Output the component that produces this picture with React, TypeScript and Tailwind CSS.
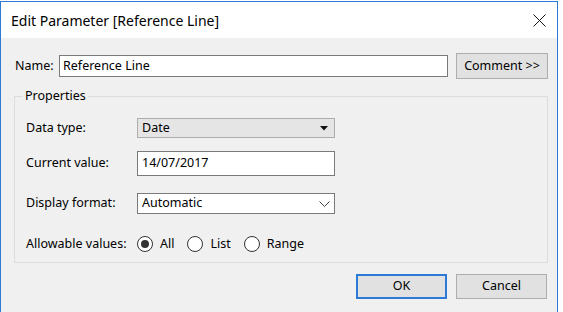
import React from "react";

function Radio({ checked, label }: { checked?: boolean; label: string }) {
  return (
    <div className="flex items-center">
      <div className="w-[16px] h-[16px] rounded-full border border-[#333333] bg-white flex items-center justify-center">
        {checked && <div className="w-[8px] h-[8px] rounded-full bg-[#333333]" />}
      </div>
      <span className="ml-[7px]">{label}</span>
    </div>
  );
}

export default function App() {
  return (
    <div
      className="w-[563px] h-[312px] overflow-hidden bg-white pt-[1px] text-[12.5px] text-black"
      style={{ fontFamily: '"Noto Sans", "Open Sans", sans-serif' }}
    >
      <div className="w-[558px] h-[320px] border-l border-r border-t border-[#2b7bd6] flex flex-col">
        {/* Title bar */}
        <div className="h-[36px] bg-white flex items-center justify-between pl-[10px] pr-[10px]">
          <span className="text-[14px] leading-none pt-[1px]">Edit Parameter [Reference Line]</span>
          <svg width="13" height="13" viewBox="0 0 13 13" className="mr-[1px]">
            <path d="M0.5 0.5 L12.5 12.5 M12.5 0.5 L0.5 12.5" stroke="#111" strokeWidth="1" fill="none" />
          </svg>
        </div>

        {/* Body */}
        <div className="flex-1 bg-[#f0f0f0] pl-[13px] pt-[15px]">
          {/* Name row */}
          <div className="flex items-center h-[26px]">
            <div className="w-[45px] pl-[1px]">Name:</div>
            <div className="w-[389px] h-[22px] bg-white border border-[#7a7a7a] flex items-center pl-[3px]">
              Reference Line
            </div>
            <div className="ml-[8px] w-[92px] h-[26px] bg-[#e1e1e1] border border-[#adadad] flex items-center justify-center">
              Comment &gt;&gt;
            </div>
          </div>

          {/* Properties group */}
          <div className="relative mt-[17px] w-[534px] border border-[#dcdcdc] pl-[11px] pt-[21px] pb-[10px]">
            <span className="absolute left-[8px] -top-[10px] px-[2px] bg-[#f0f0f0] leading-[18px]">Properties</span>

            <div className="flex items-center h-[20px]">
              <div className="w-[111px]">Data type:</div>
              <div className="w-[198px] h-[20px] bg-[#e5e5e5] border border-[#adadad] flex items-center justify-between pl-[4px] pr-[6px]">
                <span>Date</span>
                <svg width="8" height="5" viewBox="0 0 8 5">
                  <path d="M0 0 L8 0 L4 4.5 Z" fill="#111" />
                </svg>
              </div>
            </div>

            <div className="flex items-center h-[25px] mt-[13px]">
              <div className="w-[111px]">Current value:</div>
              <div className="w-[198px] h-[25px] bg-white border border-[#7a7a7a] flex items-center pl-[4px]">
                14/07/2017
              </div>
            </div>

            <div className="flex items-center h-[21px] mt-[17px]">
              <div className="w-[111px]">Display format:</div>
              <div className="w-[198px] h-[21px] bg-white border border-[#7a7a7a] flex items-center justify-between pl-[4px] pr-[4px]">
                <span>Automatic</span>
                <svg width="11" height="6" viewBox="0 0 11 6">
                  <path d="M0.5 0.5 L5.5 5.5 L10.5 0.5" stroke="#444" strokeWidth="1" fill="none" />
                </svg>
              </div>
            </div>

            <div className="flex items-center h-[16px] mt-[22px]">
              <div className="w-[111px]">Allowable values:</div>
              <div className="flex items-center gap-[13px]">
                <Radio checked label="All" />
                <Radio label="List" />
                <Radio label="Range" />
              </div>
            </div>
          </div>

          {/* Buttons */}
          <div className="flex mt-[11px] pl-[342px] gap-[9px]">
            <div className="w-[91px] h-[25px] bg-[#e1e1e1] border-2 border-[#2b7bd6] flex items-center justify-center">
              OK
            </div>
            <div className="w-[91px] h-[25px] bg-[#e1e1e1] border border-[#adadad] flex items-center justify-center">
              Cancel
            </div>
          </div>
        </div>
      </div>
    </div>
  );
}
